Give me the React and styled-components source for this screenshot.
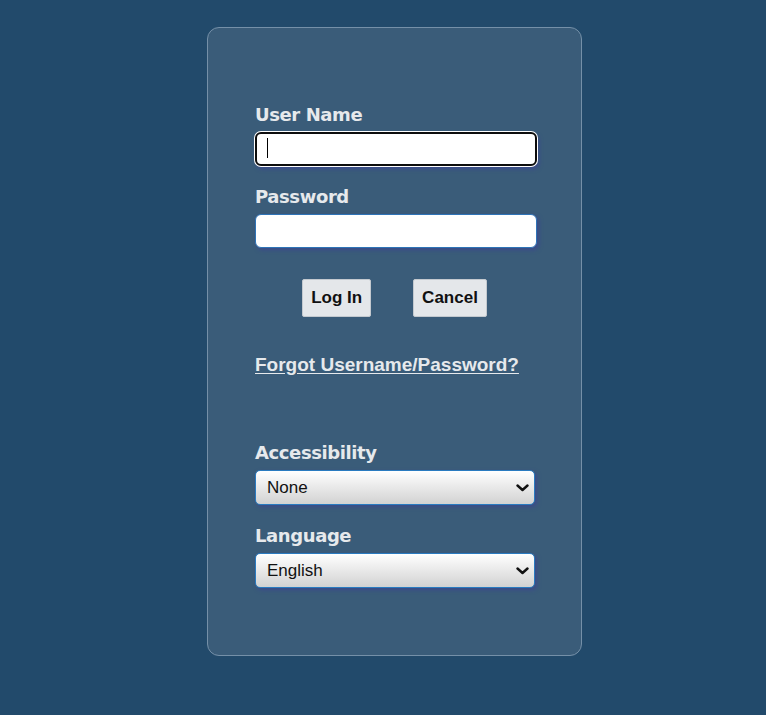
import React from "react";
import styled, { createGlobalStyle } from "styled-components";

const GlobalStyle = createGlobalStyle`
  html, body {
    margin: 0;
    padding: 0;
    background: #224a6b;
  }
`;

const Page = styled.div`
  min-height: 715px;
  padding-top: 27px;
  padding-left: 207px;
  box-sizing: border-box;
`;

const Card = styled.form`
  width: 375px;
  box-sizing: border-box;
  background: #3a5c79;
  border: 1px solid #7590a8;
  border-radius: 12px;
  padding: 76px 0 67px 47px;
  display: flex;
  flex-direction: column;
`;

const Label = styled.label`
  display: block;
  font-family: "DejaVu Sans", Verdana, sans-serif;
  font-weight: bold;
  font-size: 18px;
  line-height: 22px;
  letter-spacing: -0.4px;
  color: #e6e9ec;
  margin-top: ${(p) => p.$top || 0}px;
  margin-bottom: 6px;
`;

const Field = styled.div`
  position: relative;
  width: ${(p) => p.$w || 282}px;
`;

const Input = styled.input`
  display: block;
  width: 282px;
  height: 34px;
  box-sizing: border-box;
  background: #fff;
  border: ${(p) => (p.$focus ? "2px solid #0d0d0d" : "1px solid #2f74b7")};
  border-radius: 6px;
  outline: none;
  box-shadow: ${(p) =>
    p.$focus
      ? "0 0 0 1px #fff, 2px 3px 4px #3b4a8c"
      : "2px 2px 4px #3b4a8c"};
  font-family: Arial, "Liberation Sans", sans-serif;
  font-size: 17px;
`;

const Caret = styled.span`
  position: absolute;
  left: 12px;
  top: 6px;
  width: 1px;
  height: 20px;
  background: #000;
`;

const Buttons = styled.div`
  display: flex;
  justify-content: center;
  gap: 42px;
  margin-top: 31px;
  margin-left: -47px;
`;

const Button = styled.button`
  height: 38px;
  padding: 0 8px;
  box-sizing: border-box;
  background: #e4e7ea;
  border: 1px solid #c3c9cf;
  border-radius: 2px;
  font-family: Arial, "Liberation Sans", sans-serif;
  font-weight: bold;
  font-size: 17px;
  color: #111;
  cursor: pointer;
`;

const Forgot = styled.a`
  display: block;
  margin-top: 37px;
  font-family: Arial, "Liberation Sans", sans-serif;
  font-weight: bold;
  font-size: 19px;
  line-height: 22px;
  color: #e6e9ec;
  text-decoration: underline;
  text-underline-offset: 2px;
  cursor: pointer;
`;

const Select = styled.select`
  display: block;
  width: 280px;
  height: 35px;
  box-sizing: border-box;
  padding: 0 30px 0 11px;
  appearance: none;
  -webkit-appearance: none;
  border: 1px solid #2a7bc0;
  border-radius: 5px;
  background: linear-gradient(#ffffff, #d2d2d2);
  box-shadow: 2px 2px 4px #3b4a8c;
  font-family: Arial, "Liberation Sans", sans-serif;
  font-size: 17px;
  color: #111;
  outline: none;
`;

const Chevron = styled.svg`
  position: absolute;
  right: 6px;
  top: 14px;
  width: 13px;
  height: 8px;
  pointer-events: none;
`;

const Arrow = () => (
  <Chevron viewBox="0 0 13 8">
    <path
      d="M1.5 1.5 L6.5 6 L11.5 1.5"
      fill="none"
      stroke="#111"
      strokeWidth="2.4"
      strokeLinecap="round"
      strokeLinejoin="round"
    />
  </Chevron>
);

export default function App() {
  return (
    <>
      <GlobalStyle />
      <Page>
        <Card onSubmit={(e) => e.preventDefault()}>
          <Label htmlFor="user">User Name</Label>
          <Field>
            <Input id="user" type="text" $focus />
            <Caret />
          </Field>

          <Label htmlFor="pass" $top={20}>
            Password
          </Label>
          <Field>
            <Input id="pass" type="password" />
          </Field>

          <Buttons>
            <Button type="submit">Log In</Button>
            <Button type="button">Cancel</Button>
          </Buttons>

          <Forgot>Forgot Username/Password?</Forgot>

          <Label htmlFor="access" $top={66}>
            Accessibility
          </Label>
          <Field $w={280}>
            <Select id="access" defaultValue="none">
              <option value="none">None</option>
              <option value="screen">Screen Reader</option>
            </Select>
            <Arrow />
          </Field>

          <Label htmlFor="lang" $top={20}>
            Language
          </Label>
          <Field $w={280}>
            <Select id="lang" defaultValue="en">
              <option value="en">English</option>
              <option value="es">Español</option>
            </Select>
            <Arrow />
          </Field>
        </Card>
      </Page>
    </>
  );
}
